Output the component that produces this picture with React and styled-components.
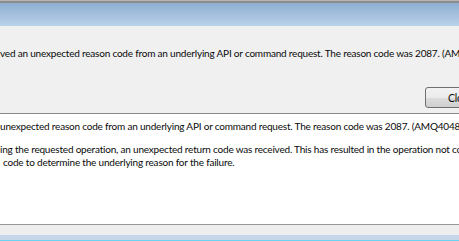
import React from "react";
import styled, { createGlobalStyle } from "styled-components";

const GlobalStyle = createGlobalStyle`
  html, body {
    margin: 0;
    padding: 0;
    background: #fff;
  }
  body {
    width: 459px;
    height: 241px;
    overflow: hidden;
    font-family: Lato, "Liberation Sans", sans-serif;
    font-size: 10px;
    letter-spacing: -0.2px;
    color: #0a0a0a;
  }
`;

const Screen = styled.div`
  display: flex;
  flex-direction: column;
  width: 459px;
  height: 241px;
  overflow: hidden;
`;

const TopStrip = styled.div`
  height: 3px;
  background: #8c8c8c;
  border-top: 1px solid #b5b5b5;
  box-sizing: border-box;
`;

const TitleBar = styled.div`
  height: 23px;
  background: linear-gradient(#8eafd1, #bad2ea);
`;

const Dialog = styled.div`
  display: flex;
  flex-direction: column;
  height: 88px;
  background: #f0f0f0;
  border-bottom: 1px solid #8a8a8a;
  box-sizing: border-box;
`;

const Line = styled.div`
  white-space: nowrap;
  overflow: hidden;
  line-height: 13px;
  padding-left: ${(p) => p.$indent || 0}px;
  margin-top: ${(p) => p.$gap || 0}px;
`;

const ButtonRow = styled.div`
  display: flex;
  justify-content: flex-end;
  margin-top: auto;
  margin-bottom: 5px;
  margin-right: -40px;
`;

const Button = styled.button`
  width: 74px;
  height: 21px;
  padding: 0 0 0 22px;
  text-align: left;
  font: inherit;
  font-size: 10.5px;
  letter-spacing: -0.2px;
  color: #0a0a0a;
  border: 1px solid #707070;
  border-radius: 3px;
  background: linear-gradient(#f2f2f2 0%, #ebebeb 50%, #dddddd 51%, #cfcfcf 100%);
`;

const Details = styled.div`
  flex: 1;
  background: #fff;
  padding-top: 6px;
`;

const Footer = styled.div`
  height: 17px;
  border-top: 1px solid #979797;
  background: linear-gradient(#eeeeee 0px, #eeeeee 10px, #c6d7ec 10px, #c6d7ec 15px, #6cd2f2 15px);
  box-sizing: border-box;
`;

export default function App() {
  return (
    <>
      <GlobalStyle />
      <Screen>
        <TopStrip />
        <TitleBar />
        <Dialog>
          <Line $gap={21}>
            ved an unexpected reason code from an underlying API or command request. The reason code was 2087. (AMQ4048)
          </Line>
          <ButtonRow>
            <Button>Close</Button>
          </ButtonRow>
        </Dialog>
        <Details>
          <Line>
            unexpected reason code from an underlying API or command request. The reason code was 2087. (AMQ4048)
          </Line>
          <Line $gap={10}>
            ing the requested operation, an unexpected return code was received. This has resulted in the operation not completing.
          </Line>
          <Line $indent={3}>
            code to determine the underlying reason for the failure.
          </Line>
        </Details>
        <Footer />
      </Screen>
    </>
  );
}
